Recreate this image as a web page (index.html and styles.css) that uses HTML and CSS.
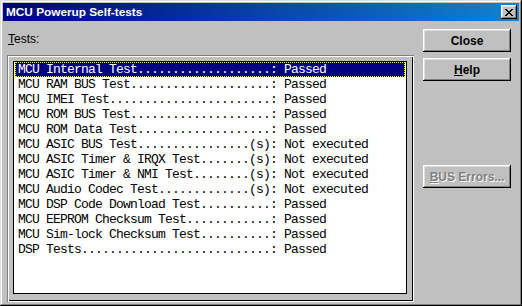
FILE: index.html
```html
<!DOCTYPE html>
<html lang="en">
<head>
    <meta charset="UTF-8">
    <title>MCU Powerup Self-tests</title>
    <link rel="stylesheet" href="styles.css">
</head>
<body>

    <div class="window">
        <!-- title bar -->
        <div class="titlebar">
            <span class="title">MCU Powerup Self-tests</span>
            <button class="title-close">
                <svg width="8" height="7" viewBox="0 0 8 7">
                    <path d="M0 0h2v1h1v1h2v-1h1v-1h2v1h-1v1h-1v1h-1v1h1v1h1v1h1v1h-2v-1h-1v-1h-2v1h-1v1h-2v-1h1v-1h1v-1h1v-1h-1v-1h-1v-1h-1z" fill="#000"/>
                </svg>
            </button>
        </div>

        <div class="content">
            <div class="tests">
                <div class="label"><u>T</u>ests:</div>
                <div class="frame">
                    <div class="listbox" id="listbox"></div>
                </div>
            </div>

            <div class="buttons">
                <button class="btn default">Close</button>
                <button class="btn"><u>H</u>elp</button>
                <button class="btn disabled"><u>B</u>US Errors...</button>
            </div>
        </div>
    </div>

    <script>
        const tests = [
            ["MCU Internal Test", "", "Passed"],
            ["MCU RAM BUS Test", "", "Passed"],
            ["MCU IMEI Test", "", "Passed"],
            ["MCU ROM BUS Test", "", "Passed"],
            ["MCU ROM Data Test", "", "Passed"],
            ["MCU ASIC BUS Test", "(s)", "Not executed"],
            ["MCU ASIC Timer & IRQX Test", "(s)", "Not executed"],
            ["MCU ASIC Timer & NMI Test", "(s)", "Not executed"],
            ["MCU Audio Codec Test", "(s)", "Not executed"],
            ["MCU DSP Code Download Test", "", "Passed"],
            ["MCU EEPROM Checksum Test", "", "Passed"],
            ["MCU Sim-lock Checksum Test", "", "Passed"],
            ["DSP Tests", "", "Passed"]
        ];

        const listbox = document.getElementById('listbox');
        tests.forEach(([name, suffix, result], i) => {
            // pad the name with dots up to column 36
            const dots = '.'.repeat(36 - name.length - suffix.length);
            const row = document.createElement('div');
            row.className = i === 0 ? 'row selected' : 'row';
            row.textContent = name + dots + suffix + ': ' + result;
            listbox.appendChild(row);
        });
    </script>
</body>
</html>
```

FILE: styles.css
```css
body {
    margin: 0;
    background-color: #c0c0c0;
    font-family: "Liberation Sans", Arial, sans-serif;
    font-size: 12px;
    color: #000;
}
/* window frame */
.window {
    width: 522px;
    height: 306px;
    box-sizing: border-box;
    padding: 3px;
    background-color: #c0c0c0;
    box-shadow: inset -1px -1px #000, inset 1px 1px #dfdfdf,
                inset -2px -2px #808080, inset 2px 2px #fff;
}
.titlebar {
    height: 18px;
    display: flex;
    align-items: center;
    justify-content: space-between;
    padding: 0 2px 0 3px;
    background: linear-gradient(90deg, #000080, #1084d0);
}
.title {
    color: #fff;
    font-weight: bold;
    font-size: 11.8px;
}
.title-close {
    width: 16px;
    height: 14px;
    padding: 0;
    border: none;
    display: flex;
    align-items: center;
    justify-content: center;
    background-color: #c0c0c0;
    box-shadow: inset -1px -1px #000, inset 1px 1px #fff,
                inset -2px -2px #808080, inset 2px 2px #dfdfdf;
}
/* body of the dialog */
.content {
    display: flex;
    padding-left: 4px;
}
.tests {
    width: 407px;
}
.label {
    margin-top: 11px;
    height: 14px;
    line-height: 14px;
    padding-left: 1px;
}
.frame {
    margin-top: 9px;
    height: 247px;
    box-sizing: border-box;
    padding: 6px 7px 6px 6px;
    box-shadow: inset 1px 1px #808080, inset 2px 2px #fff,
                inset -1px -1px #fff, inset -2px -2px #000;
}
.listbox {
    height: 233px;
    box-sizing: border-box;
    border: 1px solid #000;
    background-color: #fff;
    padding: 0 1px;
}
.row {
    height: 15px;
    line-height: 15px;
    padding-left: 3px;
    white-space: pre;
    font-family: "Liberation Mono", "Courier New", monospace;
    font-size: 13px;
    letter-spacing: -0.8px;
}
.row.selected {
    background-color: #000080;
    color: #fff;
    outline: 1px dotted #ffff00;
    outline-offset: -1px;
}
/* buttons on the right */
.buttons {
    margin-left: 9px;
    padding-top: 8px;
    display: flex;
    flex-direction: column;
}
.btn {
    width: 88px;
    height: 23px;
    margin-bottom: 6px;
    padding: 0;
    border: none;
    background-color: #c0c0c0;
    font-family: "Liberation Sans", Arial, sans-serif;
    font-size: 12px;
    font-weight: bold;
    color: #000;
    box-shadow: inset -1px -1px #000, inset 1px 1px #fff,
                inset -2px -2px #808080, inset 2px 2px #dfdfdf;
}
.btn.disabled {
    margin-top: 78px;
    color: #808080;
    text-shadow: 1px 1px #fff;
}
```
